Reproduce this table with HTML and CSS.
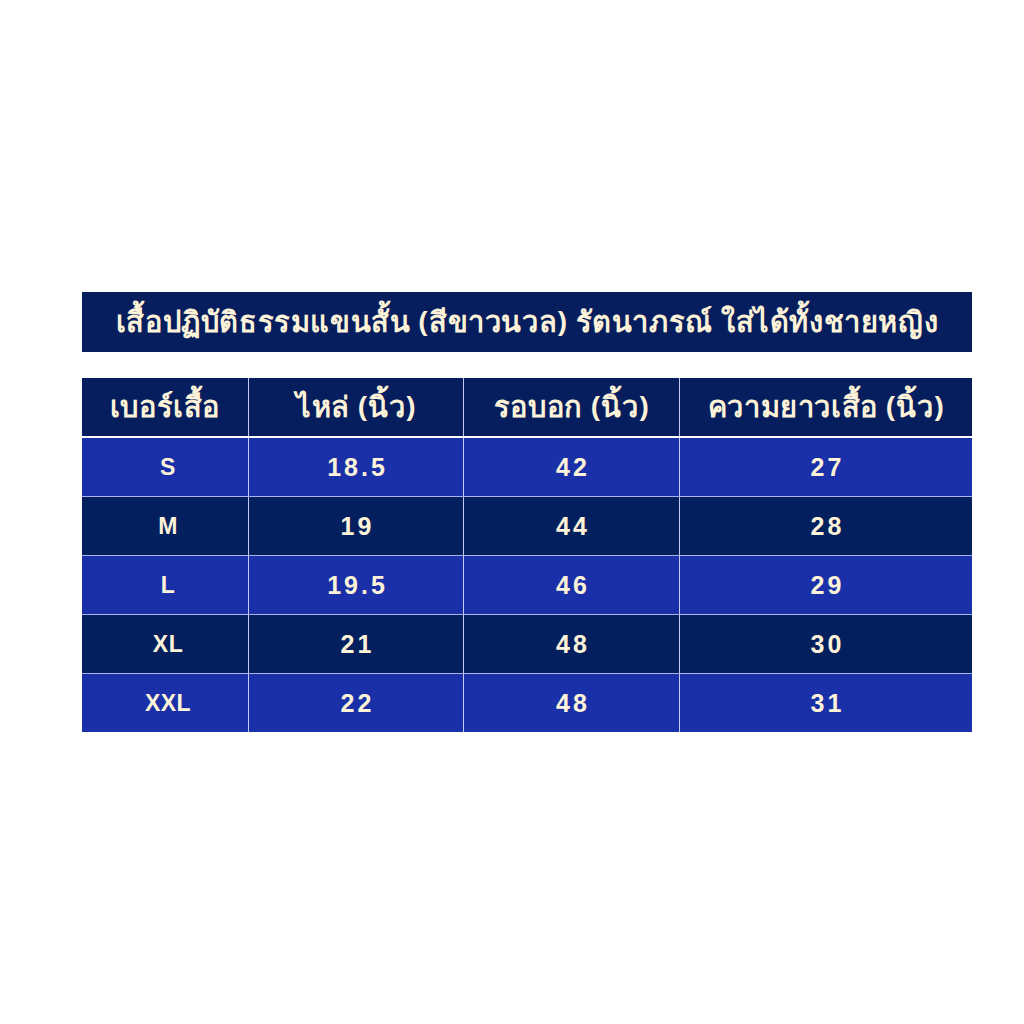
FILE: index.html
```html
<!DOCTYPE html>
<html lang="th">
<head>
<meta charset="utf-8">
<link rel="stylesheet" href="styles.css">
</head>
<body>
<div class="page">
  <div class="title">เสื้อปฏิบัติธรรมแขนสั้น (สีขาวนวล) รัตนาภรณ์ ใส่ได้ทั้งชายหญิง</div>
  <div class="table">
    <div class="row head">
      <div class="cell">เบอร์เสื้อ</div>
      <div class="cell">ไหล่ (นิ้ว)</div>
      <div class="cell">รอบอก (นิ้ว)</div>
      <div class="cell">ความยาวเสื้อ (นิ้ว)</div>
    </div>
    <div class="row light">
      <div class="cell size">S</div><div class="cell num">18.5</div><div class="cell num">42</div><div class="cell num">27</div>
    </div>
    <div class="row dark">
      <div class="cell size">M</div><div class="cell num">19</div><div class="cell num">44</div><div class="cell num">28</div>
    </div>
    <div class="row light">
      <div class="cell size">L</div><div class="cell num">19.5</div><div class="cell num">46</div><div class="cell num">29</div>
    </div>
    <div class="row dark">
      <div class="cell size">XL</div><div class="cell num">21</div><div class="cell num">48</div><div class="cell num">30</div>
    </div>
    <div class="row light last">
      <div class="cell size">XXL</div><div class="cell num">22</div><div class="cell num">48</div><div class="cell num">31</div>
    </div>
  </div>
</div>
</body>
</html>
```
FILE: styles.css
```css
html, body {
  margin: 0;
  padding: 0;
  background: #ffffff;
}
.page {
  padding: 292px 0 0 82px;
  width: 890px;
  font-family: "Noto Sans", "DejaVu Sans", sans-serif;
  color: #fdf3d8;
}
.title {
  height: 60px;
  background: #061d5e;
  display: flex;
  align-items: center;
  justify-content: center;
  font-size: 29px;
  font-weight: bold;
  letter-spacing: 0.6px;
}
.table {
  margin-top: 26px;
  display: flex;
  flex-direction: column;
}
.row {
  display: grid;
  grid-template-columns: 166px 215px 216px 293px;
  height: 59px;
  border-bottom: 1px solid #aab4ea;
  box-sizing: border-box;
}
.row.head {
  height: 60px;
  background: #061d5e;
  border-bottom: 2px solid #ffffff;
}
.row.light { background: #1a30a8; }
.row.dark { background: #041f5e; }
.row.last { border-bottom: none; height: 58px; }
.cell {
  display: flex;
  align-items: center;
  justify-content: center;
  border-left: 1px solid #c4cbf0;
  font-weight: bold;
}
.cell:first-child { border-left: none; }
.head .cell {
  font-size: 29px;
  letter-spacing: 0.6px;
}
.num {
  font-family: "Liberation Sans", Arial, sans-serif;
  font-size: 25px;
  letter-spacing: 3px;
  padding-left: 3px;
}
.size {
  font-family: "Liberation Sans", Arial, sans-serif;
  font-size: 23px;
  letter-spacing: 0.5px;
  padding-left: 6px;
}
```
